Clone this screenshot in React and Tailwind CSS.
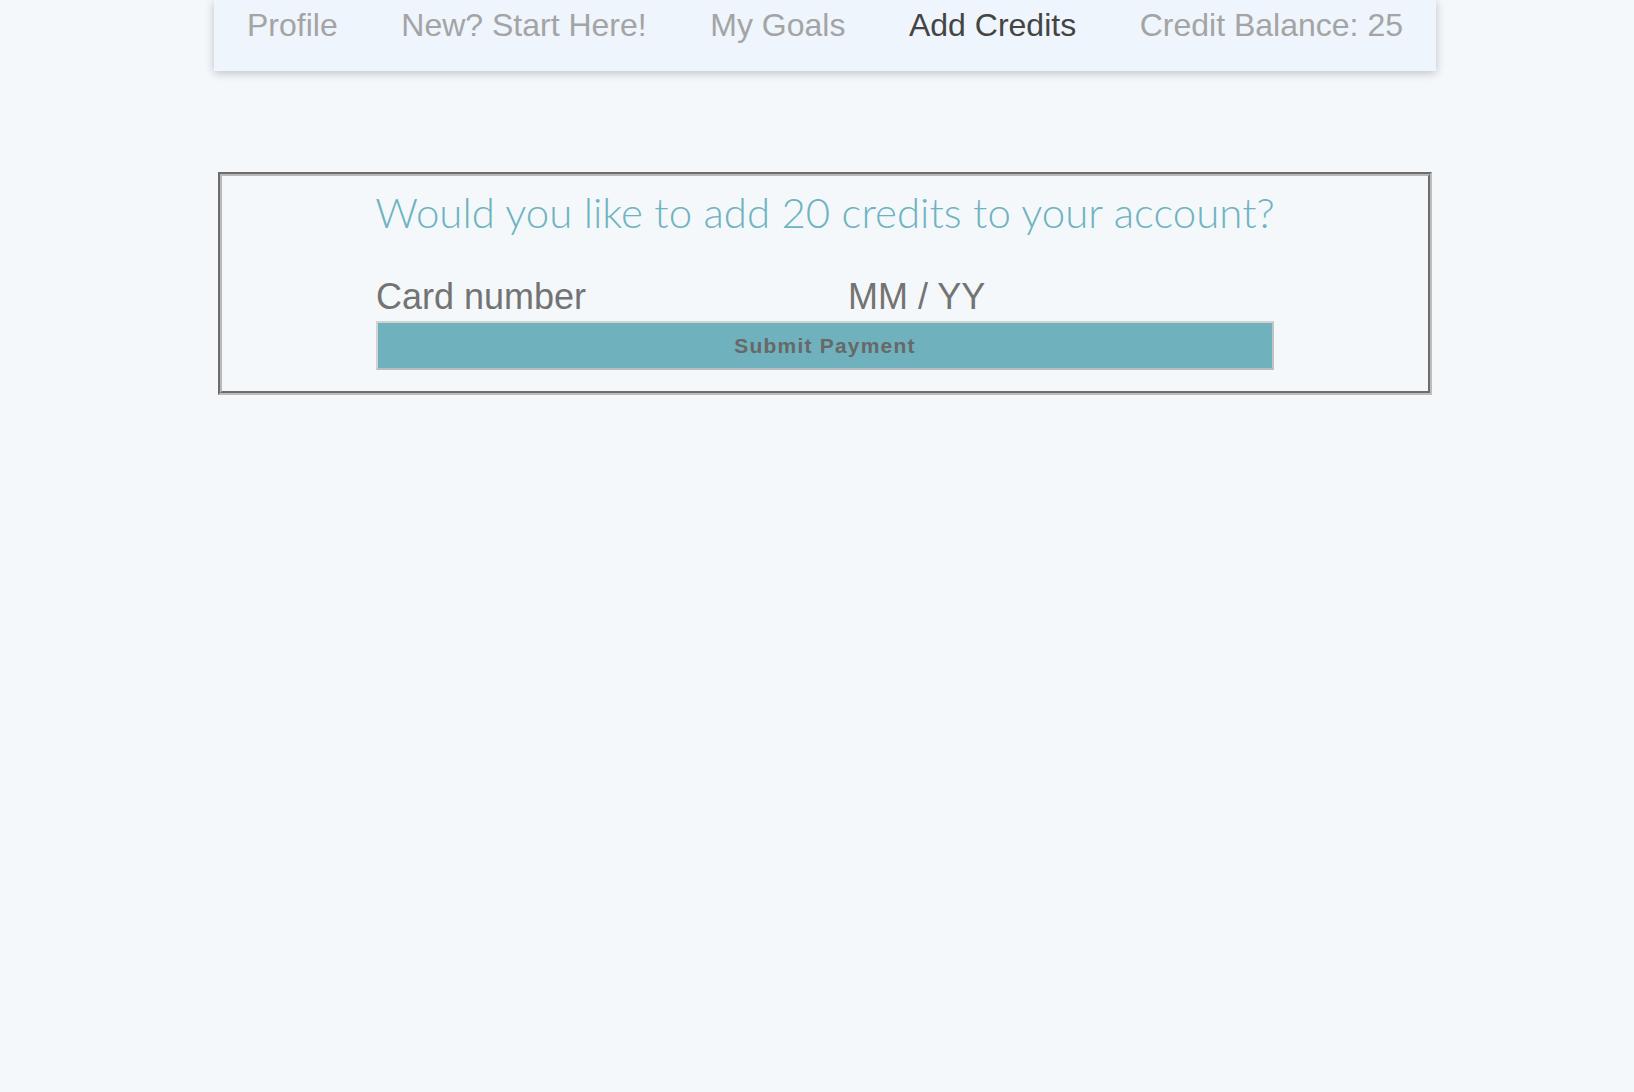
import React from "react";

const navItems = [
  { label: "Profile" },
  { label: "New? Start Here!" },
  { label: "My Goals" },
  { label: "Add Credits", active: true },
  { label: "Credit Balance: 25" },
];

export default function App() {
  return (
    <div className="min-h-screen bg-[#f4f8fb] pl-4 font-['Liberation_Sans',Arial,sans-serif]">
      <div className="mx-auto w-[1222px]">
        {/* top nav */}
        <nav className="flex h-[71px] justify-between bg-[#eef5fc] px-[33px] pt-[7px] shadow-[0_2px_9px_rgba(0,0,0,0.22)]">
          {navItems.map((item) => (
            <a
              key={item.label}
              href="#"
              className={`text-[32px] leading-[37px] ${item.active ? "text-[#444444]" : "text-[#a4a4a4]"}`}
            >
              {item.label}
            </a>
          ))}
        </nav>

        {/* payment box */}
        <div className="mx-auto mt-[101px] w-[1214px] border-2 border-t-[#6d6d6d] border-l-[#6d6d6d] border-r-[#bdbdbd] border-b-[#bdbdbd]">
          <div className="border-2 border-t-[#b9b9b9] border-l-[#b9b9b9] border-r-[#6d6d6d] border-b-[#6d6d6d] pt-[12px] pb-[21px]">
            <div className="mx-auto w-[898px]">
              <div className="flex justify-center">
                <h2 className="whitespace-nowrap font-['Lato',sans-serif] text-[42px] font-light leading-[48px] text-[#6fb3c0]">
                  Would you like to add 20 credits to your account?
                </h2>
              </div>

              <div className="mt-[41px] flex text-[36px] leading-[40px] text-[#737373]">
                <span className="w-[472px]">Card number</span>
                <span>MM / YY</span>
              </div>

              <button className="mt-1 flex h-[49px] w-full items-center justify-center border-2 border-t-[#d2d2d2] border-l-[#d2d2d2] border-r-[#c4c4c4] border-b-[#bcbcbc] bg-[#6fb1bd] text-[21px] font-bold tracking-[1.2px] text-[#686868]">
                Submit Payment
              </button>
            </div>
          </div>
        </div>
      </div>
    </div>
  );
}
